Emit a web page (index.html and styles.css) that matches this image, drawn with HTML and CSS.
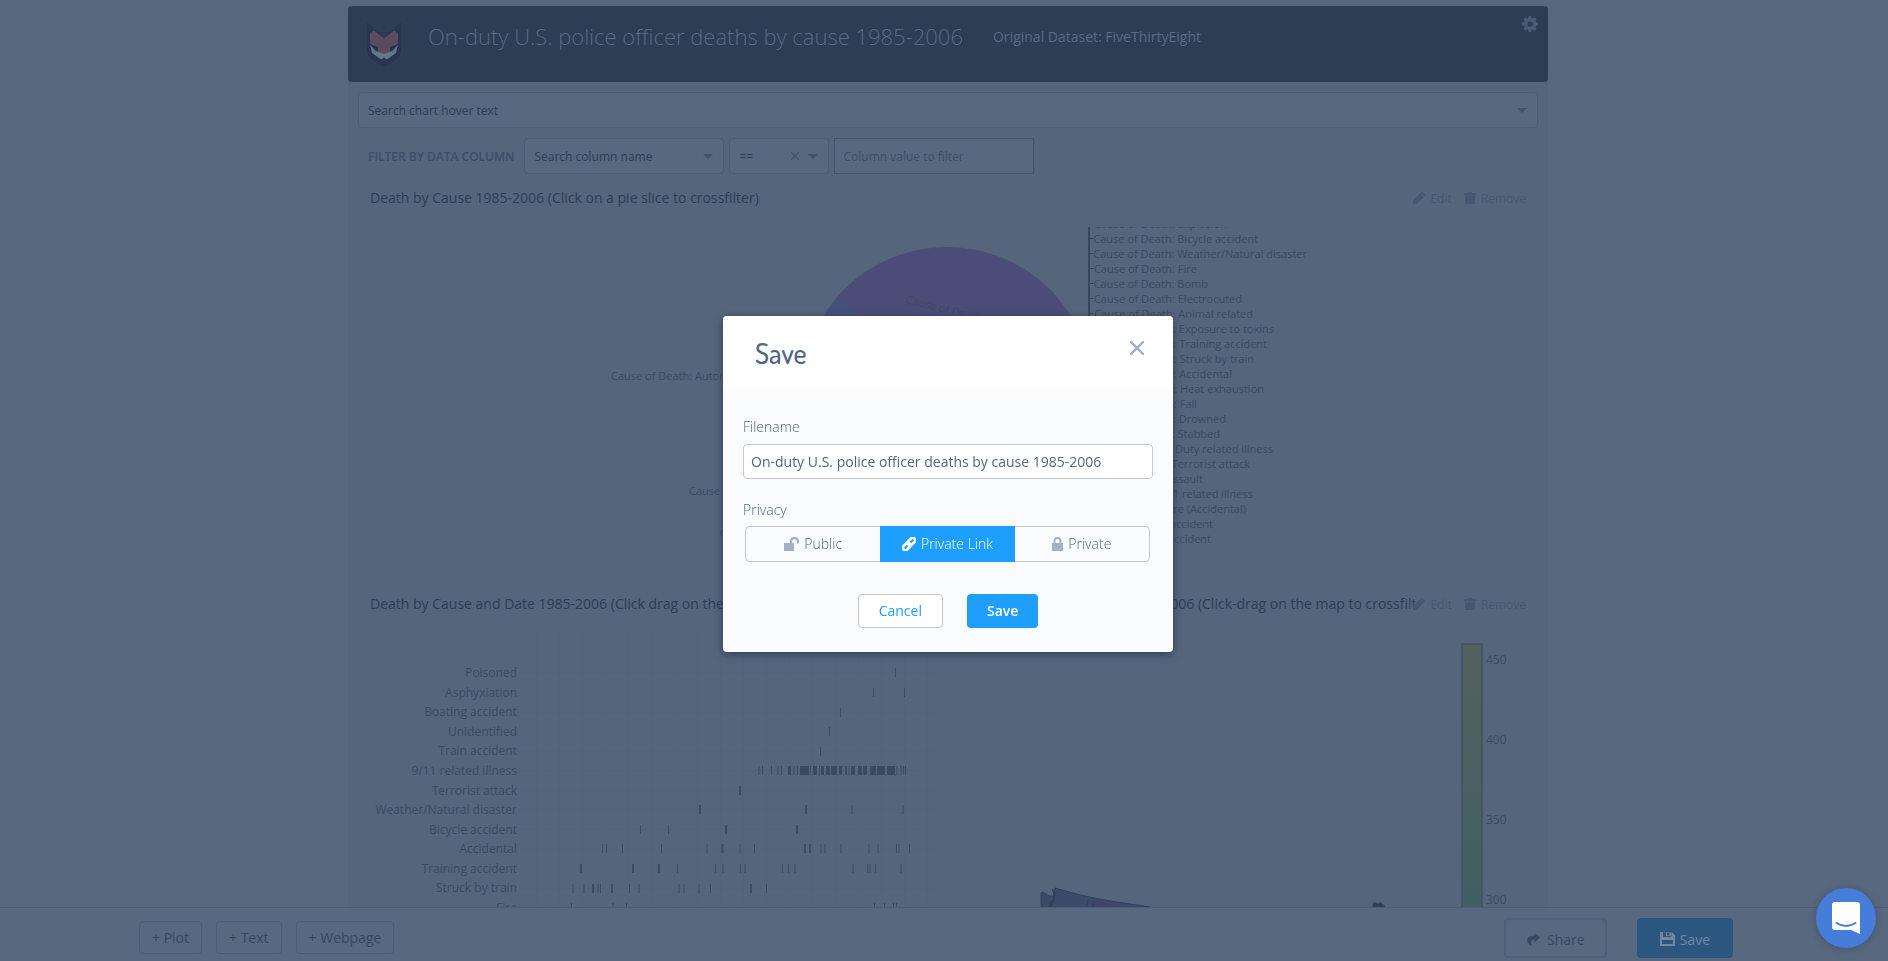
FILE: index.html
```html
<!DOCTYPE html>
<html lang="en">
<head>
<meta charset="utf-8">
<title>On-duty U.S. police officer deaths by cause 1985-2006</title>
<link rel="stylesheet" href="styles.css">
</head>
<body>
<svg class="defs" aria-hidden="true">
  <symbol id="i-edit" viewBox="0 0 12 12"><path d="M0 12l.3-4L7 1.200l3.800 3.800L4 11.700zM7.600.7Q8.900-.5 10.200.7l1.200 1.200q1.100 1.200 0 2.500z"/></symbol>
  <symbol id="i-trash" viewBox="0 0 12 12"><path d="M0 1.200h3.500V.6Q3.500 0 4.100 0h3.800q.6 0 .6.600v.6H12v1.800H0zM1 3.400h10l-.2 8.600H1.200z"/></symbol>
  <symbol id="i-caret" viewBox="0 0 10 5"><path d="M0 0h10L5 5z"/></symbol>
</svg>

<main class="page">
  <div class="dashboard">
    <header class="banner">
      <svg class="fox" viewBox="0 0 34 46" aria-hidden="true">
        <path fill="#25364d" d="M0 1l17 16L34 1v28q0 7-7 11l-10 6-10-6q-7-4-7-11z"/>
        <path fill="#5b4a60" d="M3 12l4-2.500 10 8 10-8 4 2.500v11l-8 3v5l-6 2.500-6-2.500v-5l-8-3z"/>
        <path fill="#66758b" d="M3 24l6 6 3 1 5 2 5-2 3-1 6-6-2 8-9 6.500-3-2-3 2-9-6.500z"/>
      </svg>
      <h1 class="banner-title">On-duty U.S. police officer deaths by cause 1985-2006</h1>
      <a class="banner-link" href="#">Original Dataset: FiveThirtyEight</a>
      <button class="gear" type="button" aria-label="Settings">
        <svg viewBox="0 0 16 16" width="16" height="16"><path fill-rule="evenodd" d="M6.600 0h2.800l.4 2 1.200.5 1.700-1.200 2 2L13.500 5l.5 1.200 2 .4v2.800l-2 .4-.5 1.200 1.200 1.700-2 2-1.700-1.200-1.200.5-.4 2H6.600l-.4-2-1.200-.5-1.700 1.200-2-2L2.500 11 2 9.800l-2-.4V6.600l2-.4L2.500 5 1.300 3.300l2-2L5 2.500 6.200 2zM8 5.400a2.600 2.600 0 1 0 0 5.200 2.600 2.600 0 0 0 0-5.200z"/></svg>
      </button>
    </header>

    <div class="select search">
      <select aria-label="Search chart hover text"><option>Search chart hover text</option></select>
      <svg class="caret"><use href="#i-caret"/></svg>
    </div>

    <div class="filters">
      <label class="filter-label" for="column">FILTER BY DATA COLUMN</label>
      <div class="select column">
        <select id="column"><option>Search column name</option></select>
        <svg class="caret"><use href="#i-caret"/></svg>
      </div>
      <div class="select operator">
        <select aria-label="Operator"><option>==</option></select>
        <button class="clear" type="button" aria-label="Clear"><svg viewBox="0 0 8 8" width="8" height="8"><path d="M0 0l8 8M8 0L0 8"/></svg></button>
        <svg class="caret"><use href="#i-caret"/></svg>
      </div>
      <input class="value" type="text" placeholder="Column value to filter" aria-label="Column value to filter">
    </div>

    <section class="plot">
      <div class="plot-head">
        <h2>Death by Cause 1985-2006 (Click on a pie slice to crossfilter)</h2>
        <button type="button"><svg class="act"><use href="#i-edit"/></svg>Edit</button>
        <button type="button"><svg class="act"><use href="#i-trash"/></svg>Remove</button>
      </div>
      <svg class="chart pie" viewBox="348 217 1200 368">
        <clipPath id="pieclip"><rect x="348" y="227" width="1200" height="358"/></clipPath>
        <circle cx="947" cy="393" r="146" fill="#4c4c78"/>
        <path fill="#43527a" d="M947 393L838 297A146 146 0 0 0 803 420z"/>
        <text transform="translate(905 303) rotate(14)">Cause of Death: Shot</text>
        <text x="611" y="380">Cause of Death: Automobile accident</text>
        <text x="689" y="495">Cause of Death: Heart attack</text>
        <text x="720" y="537">Cause of Death: Motorcycle</text>
        <g clip-path="url(#pieclip)">
          <path class="leader" d="M1089 227v92"/>
          <path class="leader-tick" d="M1090 238.500h3M1090 253.500h3M1090 268.500h3M1090 283.500h3M1090 298.500h3M1090 313.500h3"/>
          <g text-anchor="end">
            <text x="1227" y="228">Cause of Death: Explosion</text>
            <text x="1258" y="243">Cause of Death: Bicycle accident</text>
            <text x="1307" y="258">Cause of Death: Weather/Natural disaster</text>
            <text x="1197" y="273">Cause of Death: Fire</text>
            <text x="1208" y="288">Cause of Death: Bomb</text>
            <text x="1242" y="303">Cause of Death: Electrocuted</text>
            <text x="1253" y="318">Cause of Death: Animal related</text>
            <text x="1274" y="333">Cause of Death: Exposure to toxins</text>
            <text x="1267" y="348">Cause of Death: Training accident</text>
            <text x="1254" y="363">Cause of Death: Struck by train</text>
            <text x="1232" y="378">Cause of Death: Accidental</text>
            <text x="1264" y="393">Cause of Death: Heat exhaustion</text>
            <text x="1197" y="408">Cause of Death: Fall</text>
            <text x="1226" y="423">Cause of Death: Drowned</text>
            <text x="1220" y="438">Cause of Death: Stabbed</text>
            <text x="1273" y="453">Cause of Death: Duty related illness</text>
            <text x="1250" y="468">Cause of Death: Terrorist attack</text>
            <text x="1203" y="483">Cause of Death: Assault</text>
            <text x="1253" y="498">Cause of Death: 9/11 related illness</text>
            <text x="1246" y="513">Cause of Death: Gunfire (Accidental)</text>
            <text x="1213" y="528">Cause of Death: Aircraft accident</text>
            <text x="1211" y="543">Cause of Death: Boating accident</text>
          </g>
        </g>
      </svg>
    </section>

    <div class="pair">
      <section class="plot">
        <div class="plot-head">
          <h2>Death by Cause and Date 1985-2006 (Click drag on the plot to crossfilter)</h2>
        </div>
        <svg class="chart scatter" viewBox="348 623 600 338">
          <path class="grid" d="M536.500 633v320M559.500 633v320M582.500 633v320M605.500 633v320M628.500 633v320M651.500 633v320M674.500 633v320M697.500 633v320M720.500 633v320M743.500 633v320M766.500 633v320M789.500 633v320M812.500 633v320M835.500 633v320M858.500 633v320M881.500 633v320M904.500 633v320M927.500 633v320M518 672.500h417M518 692.500h417M518 712.500h417M518 731.500h417M518 751.500h417M518 770.500h417M518 790.500h417M518 809.500h417M518 829.500h417M518 849.500h417M518 868.500h417M518 888.500h417"/>
          <g text-anchor="end">
            <text x="517" y="677">Poisoned</text>
            <text x="517" y="697">Asphyxiation</text>
            <text x="517" y="716">Boating accident</text>
            <text x="517" y="736">Unidentified</text>
            <text x="517" y="755">Train accident</text>
            <text x="517" y="775">9/11 related illness</text>
            <text x="517" y="795">Terrorist attack</text>
            <text x="517" y="814">Weather/Natural disaster</text>
            <text x="517" y="834">Bicycle accident</text>
            <text x="517" y="853">Accidental</text>
            <text x="517" y="873">Training accident</text>
            <text x="517" y="892">Struck by train</text>
            <text x="517" y="912">Fire</text>
          </g>
          <path class="tick" d="M895.500 668v9M873.500 688v9M904.500 688v9M840.500 708v9M829.500 727v9M820.500 747v9M852 805v9M903 805v9M640.500 825v9M668.500 825v9M602.500 844v9M606.500 844v9M622.500 844v9M661.500 844v9M707 844v9M740 844v9M754.500 844v9M821 844v9M825 844v9M841 844v9M869 844v9M878 844v9M896.500 844v9M899 844v9M909.500 844v9M677.500 864v9M715.500 864v9M723 864v9M740.500 864v9M745 864v9M782.500 864v9M788.500 864v9M795 864v9M853 864v9M867.500 864v9M870 864v9M875.500 864v9M901 864v9M573 884v9M584 884v9M598 884v9M600.500 884v9M629.500 884v9M639 884v9M679 884v9M684 884v9M699 884v9M710.500 884v9M766.500 884v9M571.500 903v9M613 903v9M626.500 903v9M874.500 903v9M884.500 903v9M893.500 903v9M896.500 903v9"/>
          <path class="tick wide" d="M740 786v9M700 805v9M806 805v9M726 825v9M797 825v9M722.500 844v9M805 844v9M810 844v9M581 864v9M633 864v9M659 864v9M593 884v9M612 884v9M751 884v9"/>
          <path class="tick" d="M759 766v9M762.500 766v9M771.500 766v9M778 766v9M781.500 766v9M794 766v9M797.500 766v9M819.500 766v9M849 766v9M897 766v9M901 766v9M903.500 766v9M905.500 766v9"/>
          <g class="band">
            <rect x="788" y="766" width="3" height="9"/><rect x="800" y="766" width="9" height="9"/><rect x="810" y="766" width="1" height="9"/><rect x="813" y="766" width="4" height="9"/><rect x="821" y="766" width="3" height="9"/><rect x="826" y="766" width="4" height="9"/><rect x="831" y="766" width="6" height="9"/><rect x="839" y="766" width="3" height="9"/><rect x="845" y="766" width="2" height="9"/><rect x="851" y="766" width="4" height="9"/><rect x="858" y="766" width="4" height="9"/><rect x="863" y="766" width="4" height="9"/><rect x="870" y="766" width="6" height="9"/><rect x="877" y="766" width="8" height="9"/><rect x="887" y="766" width="8" height="9"/>
          </g>
        </svg>
      </section>

      <section class="plot">
        <div class="plot-head">
          <h2>Death by City and State 1985-2006 (Click-drag on the map to crossfilter)</h2>
          <button type="button"><svg class="act"><use href="#i-edit"/></svg>Edit</button>
          <button type="button"><svg class="act"><use href="#i-trash"/></svg>Remove</button>
        </div>
        <svg class="chart scatter" viewBox="948 623 600 338">
          <defs><linearGradient id="scale" x1="0" y1="0" x2="0" y2="1"><stop offset="0" stop-color="#52625e"/><stop offset=".5" stop-color="#4a6060"/><stop offset=".84" stop-color="#3f5f63"/><stop offset="1" stop-color="#3d5a68"/></linearGradient></defs>
          <path class="state" d="M1041 893l2-1 6 4 4 0 1-3-2-3 3 0 0-2q30 9 55 13l40 6v10H1041z"/>
          <path class="state-alt" d="M1094 901q20 4 45 7h-45z"/>
          <path class="state-line" d="M1088 900l-2 9M1094 901l-2 9"/>
          <path class="state-ink" d="M1054 891l2 1-2 10-2 4-4 2 2-6 3-3zM1372 908l1-5 3-1 1 2 4-2 4 4v4h-13z"/>
          <rect class="scale" x="1462" y="644" width="20" height="317" fill="url(#scale)"/>
          <text x="1486" y="664">450</text>
          <text x="1486" y="744">400</text>
          <text x="1486" y="824">350</text>
          <text x="1486" y="904">300</text>
        </svg>
      </section>
    </div>
  </div>
</main>

<footer class="toolbar">
  <div class="tools">
    <button type="button" class="tool">+ Plot</button>
    <button type="button" class="tool">+ Text</button>
    <button type="button" class="tool">+ Webpage</button>
  </div>
  <div class="actions">
    <button type="button" class="share"><svg viewBox="0 0 13 13" width="13" height="13"><path d="M7.500 0L13 4.600 7.500 9.300V6.500Q2.500 6 4.800 13 0 10.500 0 7 .6 2.600 7.500 2.600z"/></svg>Share</button>
    <button type="button" class="store"><svg viewBox="0 0 15 14" width="15" height="14"><path fill-rule="evenodd" d="M0 0h3v5h8.500V0L15 3v11H0zM2 8v4h11V8zM7 0h2.500v3.500H7zM3.800 0h2.200v4h5V.5"/></svg>Save</button>
  </div>
</footer>

<div class="overlay">
  <form class="modal" role="dialog" aria-labelledby="modal-title">
    <div class="modal-head">
      <h2 id="modal-title">Save</h2>
      <button class="close" type="button" aria-label="Close"><svg viewBox="0 0 14 14" width="14" height="14"><path d="M0 0l14 14M14 0L0 14"/></svg></button>
    </div>
    <div class="modal-body">
      <label class="field-label" for="filename">Filename</label>
      <input class="filename" id="filename" type="text" value="On-duty U.S. police officer deaths by cause 1985-2006">
      <div class="field-label" id="privacy">Privacy</div>
      <div class="segments" role="group" aria-labelledby="privacy">
        <button type="button"><svg viewBox="0 0 15 14" width="15" height="14"><path d="M0 6h6V4q0-4 4.500-4T15 4v2.500h-2V4.400q0-2.200-2.500-2.200T8 4.400V6h2v8H0z"/></svg>Public</button>
        <button type="button" class="active" aria-pressed="true"><svg viewBox="0 0 14 14" width="14" height="14"><g fill="none" stroke="currentColor" stroke-width="2.600"><rect x="5.100" y="2" width="8.600" height="5" rx="2.500" transform="rotate(-45 9.400 4.500)"/><rect x=".3" y="7" width="8.600" height="5" rx="2.500" transform="rotate(-45 4.600 9.500)"/></g></svg>Private Link</button>
        <button type="button"><svg viewBox="0 0 11 14" width="11" height="14"><path fill-rule="evenodd" d="M0 6h1.500V4q0-4 4-4t4 4v2H11v8H0zM3.500 6h4V4q0-2-2-2t-2 2z"/></svg>Private</button>
      </div>
      <div class="modal-actions">
        <button type="button" class="cancel">Cancel</button>
        <button type="submit" class="save">Save</button>
      </div>
    </div>
  </form>
</div>

<button class="messenger" type="button" aria-label="Open chat">
  <svg viewBox="0 0 28 32" width="28" height="32"><path fill="#fff" d="M3 0h22q3 0 3 3v29l-9-4H3q-3 0-3-3V3q0-3 3-3z"/><path fill="none" stroke="#457dd9" stroke-width="2" stroke-linecap="round" d="M4.500 21q9.500 6 19 0"/></svg>
</button>
</body>
</html>
```
FILE: styles.css
```css
* { box-sizing: border-box; }
body {
  margin: 0;
  height: 100vh;
  overflow: hidden;
  background: #58687f;
  color: #2c3d55;
  font-family: "Open Sans", "Noto Sans", sans-serif;
  font-size: 14px;
}
button, input, select { font: inherit; color: inherit; margin: 0; }
button { display: inline-flex; align-items: center; justify-content: center; padding: 0; border: 0; background: none; cursor: pointer; }
button svg { fill: currentColor; }
h1, h2 { margin: 0; font-weight: 400; }
.defs { position: absolute; width: 0; height: 0; }

.page { height: 100vh; overflow: hidden; padding: 6px 0 0 8px; }
.dashboard { max-width: 1200px; min-height: 100%; margin: 0 auto; background: #55657b; }

.banner { position: relative; display: flex; align-items: flex-start; min-height: 76px; padding: 15px 19px; border-radius: 4px; background: #2d3d54; color: #596a82; }
.fox { width: 34px; height: 46px; margin-right: 27px; }
.banner-title { font-size: 22px; font-weight: 300; line-height: 30px; }
.banner-link { margin-left: 30px; color: inherit; font-size: 14px; font-weight: 500; line-height: 32px; text-decoration: none; }
.gear { position: absolute; top: 10px; right: 10px; color: #485a74; }

.select { position: relative; display: flex; align-items: center; height: 36px; border: 1px solid #4d5d74; border-radius: 4px; background: #58687f; font-size: 12px; }
.select select { appearance: none; width: 100%; height: 100%; padding: 0 9px; border: 0; outline: 0; background: transparent; }
.caret { position: absolute; right: 10px; width: 10px; height: 5px; fill: #42536b; }
.search { margin: 10px 10px 0; }
.filters { display: flex; align-items: center; gap: 5px; margin: 10px 20px 0; }
.filter-label { margin-right: 5px; color: #3b4e69; font-size: 12px; font-weight: 600; }
.column { width: 200px; }
.operator { width: 100px; }
.clear { position: absolute; right: 29px; }
.clear path { stroke: #42536b; stroke-width: 1.4; }
.value { width: 200px; height: 36px; padding: 0 8px; border: 1px solid #44556d; background: #58687f; font-size: 12px; }
.value::placeholder { color: #3e4f66; opacity: 1; }

.plot { min-width: 0; }
.plot-head { display: flex; align-items: center; height: 38px; padding: 0 22px; }
.filters + .plot { margin-top: 5px; }
.plot-head h2 { flex: 1; overflow: hidden; margin-right: -2px; font-size: 14px; line-height: 24px; white-space: nowrap; }
.plot-head button { margin-right: 12px; color: #455872; font-size: 12px; }
.plot-head button:last-child { margin-right: 0; }
.act { width: 12px; height: 12px; margin-right: 5px; }
.pair { display: grid; grid-template-columns: 1fr 1fr; }

.chart { display: block; width: 100%; height: auto; }
.chart text { fill: #3b4b61; font-size: 12px; }
.chart.pie text { font-size: 11px; }
.leader { stroke: #36475e; stroke-width: 2; }
.leader-tick { stroke: #36475e; }
.grid { stroke: #536379; }
.tick { stroke: #3b4c63; }
.tick.wide { stroke-width: 2; }
.band { fill: #394a61; }
.state { fill: #3b4a68; stroke: #2f405a; }
.state-alt { fill: #40446a; }
.state-line { stroke: #2f405a; }
.state-ink { fill: #304159; }
.scale { stroke: #445569; stroke-width: 2; }

.toolbar { position: fixed; left: 0; right: 0; bottom: 0; display: flex; justify-content: space-between; height: 54px; padding: 10px 155px 0 139px; border-top: 1px solid #4d5d74; background: #58687f; color: #35475f; }
.tools { display: flex; align-items: flex-start; gap: 14px; padding-top: 3px; }
.tool { height: 33px; padding: 0 12px; border: 1px solid #4a5d79; border-radius: 4px; }
.actions { display: flex; align-items: flex-start; gap: 30px; }
.share, .store { height: 40px; padding-top: 2px; border-radius: 4px; }
.share { gap: 7px; padding-left: 21px; padding-right: 20px; border: 2px solid #4e5f79; color: #374961; }
.store { gap: 5px; padding-left: 23px; padding-right: 23px; background: #2b5680; color: #7587a0; }

.overlay { position: fixed; inset: 0; display: flex; align-items: center; justify-content: center; padding: 6px 0 0 8px; }
.modal { width: 450px; overflow: hidden; border-radius: 4px; background: #f9fbfd; box-shadow: 0 2px 8px #2a3f5f; color: #506784; }
.modal-head { display: flex; align-items: flex-start; justify-content: space-between; height: 74px; padding: 20px 29px 0 32px; background: #fff; }
.modal-head h2 { font-family: Dosis, Lato, sans-serif; font-size: 28px; font-weight: 500; line-height: 34px; }
.close { padding-top: 5px; }
.close path { fill: none; stroke: #a2b1c6; stroke-width: 2.4; }
.modal-body { padding: 27px 20px 24px; }
.field-label { display: block; font-weight: 300; line-height: 20px; }
.filename { width: 100%; height: 35px; margin: 7px 0 21px; padding: 0 7px; border: 1px solid #c8c8c8; border-radius: 4px; background: #fff; }
.segments { display: grid; grid-template-columns: 1fr 1fr 1fr; height: 36px; margin: 6px 3px 0 2px; border: 1px solid #c8c8c8; border-radius: 4px; }
.segments button { gap: 5px; font-weight: 300; }
.segments svg { fill: #a2b1c6; }
.segments .active { margin: -1px 0; background: #1f9ffd; color: #fff; }
.modal-actions { display: flex; justify-content: center; gap: 24px; margin-top: 32px; }
.cancel, .save { height: 34px; padding: 0 20px; border-radius: 4px; }
.cancel { border: 1px solid #c8c8c8; background: #fff; color: #1f9ffd; font-weight: 500; }
.save { background: #1f9ffd; color: #fff; font-weight: 600; }

.messenger { position: fixed; right: 12px; bottom: 13px; width: 60px; height: 60px; border-radius: 50%; background: #457dd9; box-shadow: 0 1px 8px rgba(0, 0, 0, .2); }
```
